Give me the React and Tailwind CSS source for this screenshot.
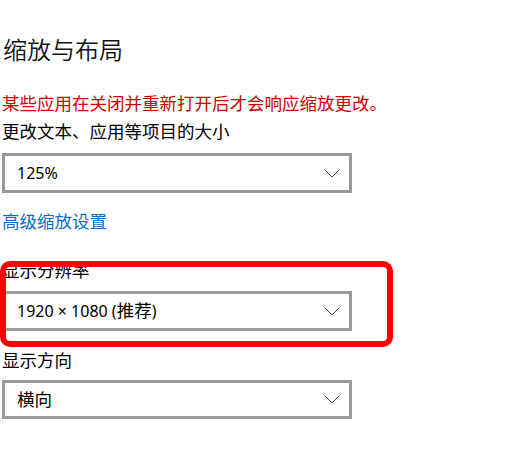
import React from "react";

const font = { fontFamily: '"Noto Sans", "Noto Sans CJK SC", sans-serif' };

function Chevron() {
  return (
    <svg width="16" height="9" viewBox="0 0 16 9" className="shrink-0">
      <path d="M0.5 0.5 L8 8 L15.5 0.5" fill="none" stroke="#444" strokeWidth="1" />
    </svg>
  );
}

function Dropdown({ children, h = "h-[40px]" }) {
  return (
    <div
      className={`w-[350px] ${h} border-[3px] border-[#999999] bg-white flex items-center justify-between pl-[12px] pr-[9px]`}
    >
      <span className="text-[16px] leading-none text-black">{children}</span>
      <Chevron />
    </div>
  );
}

export default function App() {
  return (
    <div
      className="relative w-[522px] h-[449px] bg-white overflow-hidden"
      style={font}
    >
      <div className="flex flex-col pt-[34px] pl-[2px]">
        <h1 className="text-[24px] leading-[32px] text-[#111] pl-[1px] font-[350]">缩放与布局</h1>
        <p className="mt-[25px] text-[17.5px] leading-[24px] text-[#d10000]">
          某些应用在关闭并重新打开后才会响应缩放更改。
        </p>
        <p className="mt-[4px] text-[17.5px] leading-[24px] text-black">更改文本、应用等项目的大小</p>
        <div className="mt-[10px]">
          <Dropdown>125%</Dropdown>
        </div>
        <a className="mt-[16px] text-[17.5px] leading-[24px] text-[#0a6fcc]">高级缩放设置</a>
        <p className="mt-[25px] text-[17.5px] leading-[24px] text-black">显示分辨率</p>
        <div className="mt-[9px]">
          <Dropdown>
            1920 × 1080 (<span className="text-[17.5px]">推荐</span>)
          </Dropdown>
        </div>
        <p className="mt-[17px] text-[17.5px] leading-[24px] text-black">显示方向</p>
        <div className="mt-[8px]">
          <Dropdown h="h-[39px]">
            <span className="text-[17.5px]">横向</span>
          </Dropdown>
        </div>
      </div>
      <div className="absolute left-0 top-[261px] w-[393px] h-[86px] border-[6px] border-[#ff0000] rounded-[10px] pointer-events-none" />
    </div>
  );
}
